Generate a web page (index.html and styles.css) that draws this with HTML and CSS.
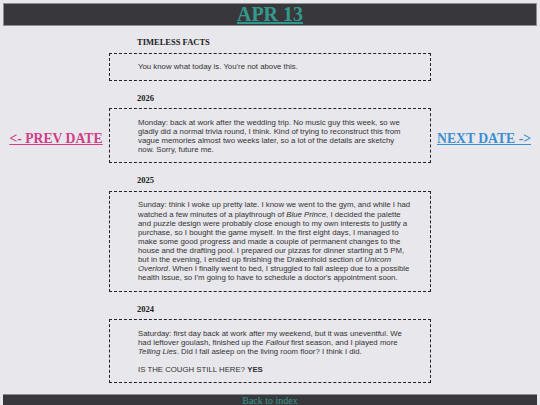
FILE: index.html
```html
<!DOCTYPE html>
<html lang="en">
<head>
  <meta charset="UTF-8" />
  <meta name="viewport" content="width=device-width, initial-scale=1.0" />
  <title>Apr 13</title>
  <link rel="stylesheet" href="styles.css">
</head>
<body>
  <header class="top-bar">
    <h1><a href="#">APR 13</a></h1>
  </header>

  <div class="layout">
    <nav class="side prev">
      <a href="#">&lt;- PREV DATE</a>
    </nav>

    <main class="entries">
      <section class="entry">
        <h3>TIMELESS FACTS</h3>
        <div class="box">
          <p>You know what today is. You're not above this.</p>
        </div>
      </section>

      <section class="entry">
        <h3>2026</h3>
        <div class="box">
          <p>Monday: back at work after the wedding trip. No music guy this week, so we gladly did a normal trivia round, I think. Kind of trying to reconstruct this from vague memories almost two weeks later, so a lot of the details are sketchy<br>now. Sorry, future me.</p>
        </div>
      </section>

      <section class="entry">
        <h3>2025</h3>
        <div class="box">
          <p>Sunday: think I woke up pretty late. I know we went to the gym, and while I had watched a few minutes of a playthrough of <em>Blue Prince</em>, I decided the palette and puzzle design were probably close enough to my own interests to justify a purchase, so I bought the game myself. In the first eight days, I managed to make some good progress and made a couple of permanent changes to the house and the drafting pool. I prepared our pizzas for dinner starting at 5 PM, but in the evening, I ended up finishing the Drakenhold section of <em>Unicorn Overlord</em>. When I finally went to bed, I struggled to fall asleep due to a possible health issue, so I'm going to have to schedule a doctor's appointment soon.</p>
        </div>
      </section>

      <section class="entry">
        <h3>2024</h3>
        <div class="box">
          <p>Saturday: first day back at work after my weekend, but it was uneventful. We had leftover goulash, finished up the <em>Fallout</em> first season, and I played more <em>Telling Lies</em>. Did I fall asleep on the living room floor? I think I did.</p>
          <p>IS THE COUGH STILL HERE? <strong>YES</strong></p>
        </div>
      </section>
    </main>

    <nav class="side next">
      <a href="#">NEXT DATE -&gt;</a>
    </nav>
  </div>

  <footer class="bottom-bar">
    <a href="#">Back to index</a>
  </footer>
</body>
</html>
```

FILE: styles.css
```css
body {
  margin: 3px;
  background-color: #e8e7ec;
  font-family: "Liberation Serif", "Times New Roman", serif;
  color: #222222;
}

.top-bar,
.bottom-bar {
  background-color: #38383c;
  border: 1px solid #8e8d92;
  text-align: center;
}

.top-bar h1 {
  margin: 0;
  font-size: 20px;
  line-height: 21px;
}

.top-bar a,
.bottom-bar a {
  color: #33998c;
}

.layout {
  display: grid;
  grid-template-columns: 1fr 322px 1fr;
}

.side {
  text-align: center;
  margin-top: 105px;
  font-size: 13.7px;
  font-weight: bold;
}

.prev a {
  color: #d23d87;
}

.next a {
  color: #3b8fd2;
}

.entries {
  padding-top: 12px;
}

.entry {
  margin-bottom: 13px;
}

.entry:last-child {
  margin-bottom: 0;
}

.entry h3 {
  margin: 0 0 5.5px;
  padding-left: 28px;
  font-size: 8.5px;
  line-height: 9px;
  color: #1c1c1c;
}

.box {
  border: 1px dashed #222222;
  padding: 0 16px 0 28px;
  font-family: "Liberation Sans", Arial, sans-serif;
  font-size: 7.8px;
  line-height: 9.1px;
  color: #333333;
}

.box p {
  margin: 8.5px 0;
}

.bottom-bar {
  margin-top: 11px;
  padding-bottom: 20px;
  border-width: 1px 0 0;
  font-size: 10px;
  line-height: 12px;
}
```
